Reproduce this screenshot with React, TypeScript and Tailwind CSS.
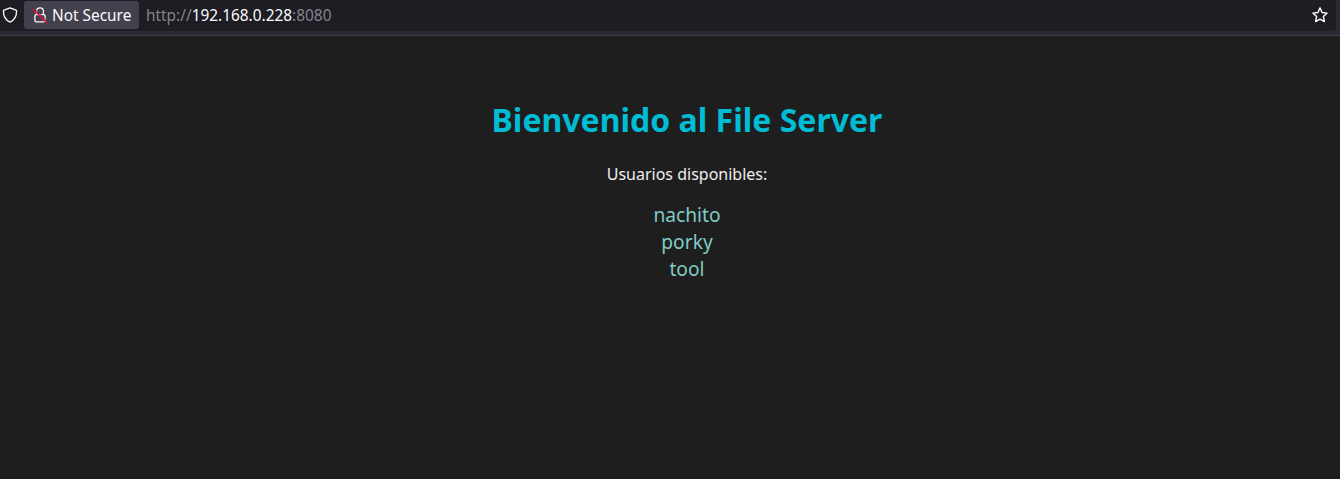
const users = ["nachito", "porky", "tool"];

function ShieldIcon() {
  return (
    <svg className="block size-4 shrink-0" viewBox="0 0 16 16" fill="none" stroke="#fbfbfe" strokeWidth="1.35" strokeLinejoin="round">
      <path d="M8 .9 14 3.2q.6.2.6.8C14.6 9.2 12.3 13.2 8 15.1 3.7 13.2 1.4 9.2 1.4 4q0-.6.6-.8Z" />
    </svg>
  );
}

function InsecureLockIcon() {
  return (
    <svg className="block size-4 shrink-0" viewBox="0 0 16 16" fill="none">
      <path d="M4.6 7.5V4.2a3.4 3.4 0 0 1 6.8 0v3.3" stroke="#fbfbfe" strokeWidth="1.3" />
      <rect x="2.9" y="7.6" width="10.2" height="7.2" rx="1.4" stroke="#fbfbfe" strokeWidth="1.3" />
      <path d="m2.4 1.6 12.6 12.6" stroke="#42414d" strokeWidth="1" />
      <path d="m1.7 2.7 12.8 12.8" stroke="#f6043c" strokeWidth="1.5" strokeLinecap="round" />
    </svg>
  );
}

function StarIcon() {
  return (
    <svg className="block size-4 shrink-0" viewBox="0 0 16 16" fill="none" stroke="#fbfbfe" strokeWidth="1.4" strokeLinejoin="round">
      <path d="m8 .9 2.1 4.6 5 .6-3.7 3.5 1 5L8 12.1l-4.4 2.5 1-5L.9 6.1l5-.6Z" />
    </svg>
  );
}

function AddressBar() {
  return (
    <header className="h-9 border-b border-[#3e3d48] bg-[#2b2a33] pr-1 text-[15.4px] leading-5">
      <div className="flex h-[31px] items-center rounded-br bg-[#1e1d24] pr-2 pb-px pl-0.5">
        <ShieldIcon />
        <div className="ml-1.5 flex h-7 w-[115px] shrink-0 items-center gap-1 rounded-[3px] bg-[#42414d] pl-2 text-[#fbfbfe]">
          <InsecureLockIcon />
          <span className="pt-0.5 whitespace-nowrap">Not Secure</span>
        </div>
        <div className="ml-[7px] flex-1 pt-0.5 whitespace-nowrap text-[#85848b]">
          http://<span className="text-[#fbfbfe]">192.168.0.228</span>:8080
        </div>
        <StarIcon />
      </div>
    </header>
  );
}

export default function App() {
  return (
    <div className="flex h-screen flex-col overflow-hidden bg-[#1e1e1e] font-['Noto_Sans',sans-serif]">
      <AddressBar />
      <main className="flex-1 pt-[62px] pl-[34px] text-center">
        <h1 className="text-[32px] leading-[44px] font-bold text-[#00bcd4]">Bienvenido al File Server</h1>
        <p className="mt-[21px] text-base leading-[22px] text-[#eeeeee]">Usuarios disponibles:</p>
        <ul className="mt-4 text-[19.2px] leading-[27px] text-[#80cbc4]">
          {users.map((user) => (
            <li key={user}>
              <a>{user}</a>
            </li>
          ))}
        </ul>
      </main>
    </div>
  );
}
